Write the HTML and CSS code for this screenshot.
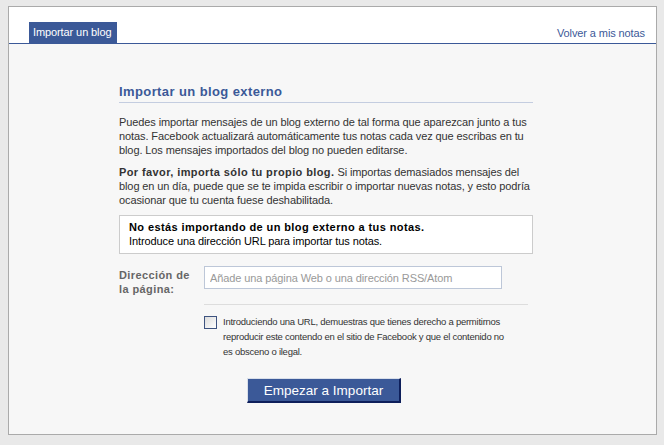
FILE: index.html
```html
<!DOCTYPE html>
<html lang="es">
<head>
    <meta charset="UTF-8">
    <title>Importar un blog</title>
    <link rel="stylesheet" href="styles.css">
</head>
<body>
    <div class="panel">
        <div class="cabecera">
            <div class="pestana">Importar un blog</div>
            <a class="volver" href="#">Volver a mis notas</a>
        </div>

        <div class="contenido">
            <div class="columna">
                <h2>Importar un blog externo</h2>

                <p>Puedes importar mensajes de un blog externo de tal forma que aparezcan junto a tus notas. Facebook actualizará automáticamente tus notas cada vez que escribas en tu blog. Los mensajes importados del blog no pueden editarse.</p>

                <p><b>Por favor, importa sólo tu propio blog.</b> Si importas demasiados mensajes del blog en un día, puede que se te impida escribir o importar nuevas notas, y esto podría ocasionar que tu cuenta fuese deshabilitada.</p>

                <div class="aviso">
                    <b>No estás importando de un blog externo a tus notas.</b><br>
                    Introduce una dirección URL para importar tus notas.
                </div>

                <div class="fila-form">
                    <label for="url">Dirección de la página:</label>
                    <input type="text" id="url" placeholder="Añade una página Web o una dirección RSS/Atom">
                </div>

                <div class="terminos">
                    <div class="terminos-fila">
                        <span class="casilla"></span>
                        <p>Introduciendo una URL, demuestras que tienes derecho a permitirnos reproducir este contendo en el sitio de Facebook y que el contenido no es obsceno o ilegal.</p>
                    </div>
                </div>

                <div class="acciones">
                    <button>Empezar a Importar</button>
                </div>
            </div>
        </div>
    </div>
</body>
</html>
```

FILE: styles.css
```css
:root {
    --azul: #3b5998;
    --fondo: #e9e9e9;
    --fondo-panel: #f7f7f7;
    --texto: #333;
}

body {
    margin: 0;
    padding: 6px 7px 0 8px;
    background-color: var(--fondo);
    font-family: 'Liberation Sans', Arial, sans-serif;
    font-size: 11px;
    letter-spacing: -0.1px;
    color: var(--texto);
}

b {
    letter-spacing: 0.4px;
}

.panel {
    border: 1px solid #aaa;
    background-color: var(--fondo-panel);
    box-sizing: border-box;
    height: 429px;
}

.cabecera {
    background-color: white;
    height: 36px;
    border-bottom: 1px solid var(--azul);
    display: flex;
    justify-content: space-between;
    align-items: flex-end;
    padding: 0 11px 0 20px;
}

.pestana {
    background-color: var(--azul);
    color: white;
    padding: 4px 5px 5px 4px;
    line-height: 12px;
    white-space: nowrap;
}

.volver {
    color: var(--azul);
    text-decoration: none;
    margin-bottom: 4px;
}

.contenido {
    padding: 40px 0 0 110px;
}

.columna {
    width: 414px;
}

h2 {
    margin: 0 0 12px;
    padding: 0 0 3px;
    font-size: 13px;
    letter-spacing: 0.4px;
    color: var(--azul);
    border-bottom: 1px solid #c4cde0;
}

p {
    margin: 0 0 8px;
    line-height: 14px;
}

.aviso {
    background-color: white;
    border: 1px solid #ccc;
    padding: 4px 9px 5px;
    line-height: 14px;
    color: #000;
    margin-top: 6px;
}

.fila-form {
    display: flex;
    margin-top: 12px;
    padding-bottom: 8px;
}

.fila-form label {
    flex: none;
    width: 78px;
    margin-right: 7px;
    font-weight: bold;
    letter-spacing: 0.4px;
    color: #666;
    line-height: 14px;
    padding-top: 2px;
}

.fila-form input {
    width: 298px;
    height: 23px;
    box-sizing: border-box;
    border: 1px solid #bdc7d8;
    padding: 3px 5px;
    font-family: inherit;
    font-size: 11px;
    letter-spacing: -0.1px;
}

.fila-form input::placeholder {
    color: #999;
}

.terminos {
    margin-left: 85px;
    border-top: 1px solid #ddd;
    padding-top: 11px;
    width: 324px;
}

.terminos-fila {
    display: flex;
    gap: 6px;
    width: 311px;
}

.casilla {
    flex: none;
    width: 11px;
    height: 11px;
    border: 1px solid #3e5380;
    background: linear-gradient(135deg, #dcdcdc, #fff);
}

.terminos p {
    font-size: 9.5px;
    letter-spacing: -0.25px;
    line-height: 15px;
    margin: -2px 0 0;
}

.acciones {
    margin: 19px 0 0 128px;
}

button {
    background-color: var(--azul);
    color: white;
    font-family: 'Liberation Sans', Arial, sans-serif;
    font-size: 13.5px;
    border-style: solid;
    border-width: 1px 2px 2px 1px;
    border-color: #d9dfea #0e1f5b #0e1f5b #d9dfea;
    width: 154px;
    height: 25px;
    padding: 0;
}
```
